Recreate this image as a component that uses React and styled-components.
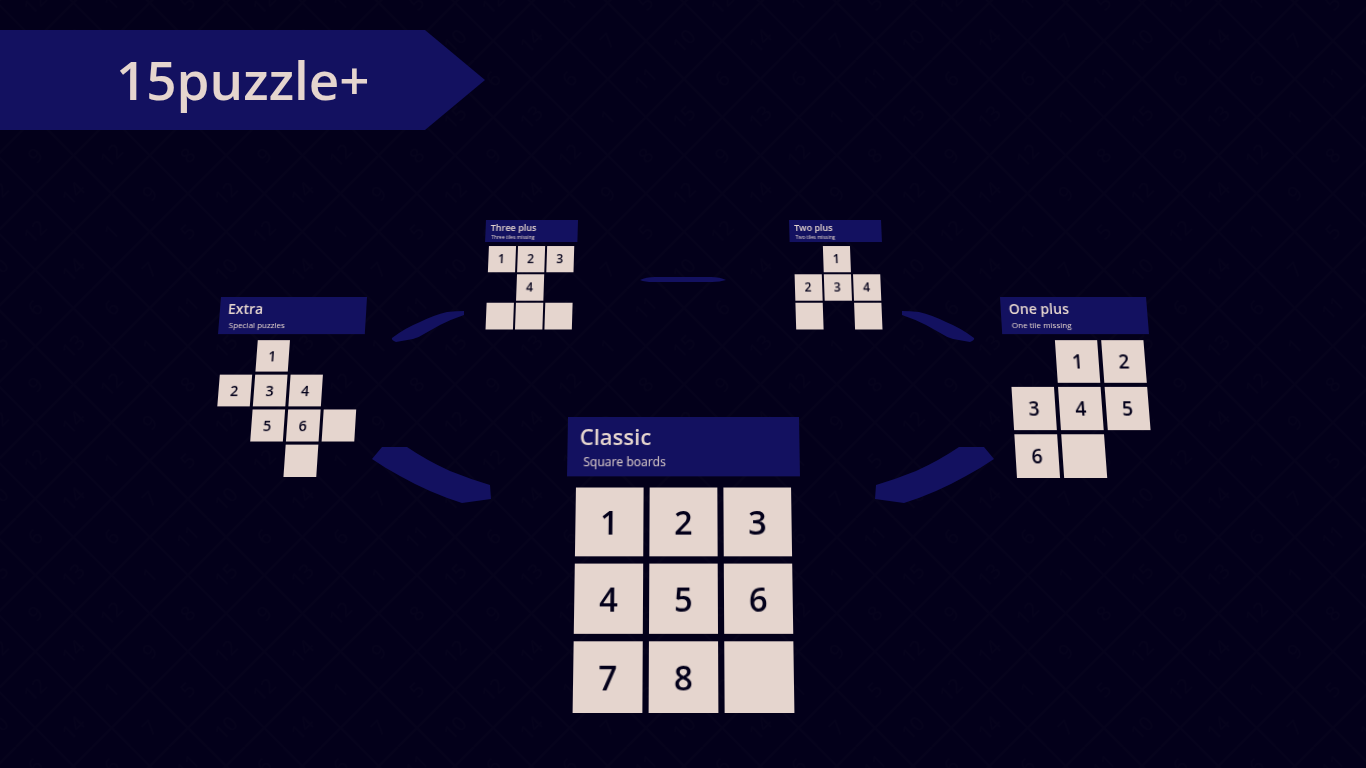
import React from "react";
import styled, { createGlobalStyle } from "styled-components";

const navy = "#131160";
const cream = "#e5d5ce";
const night = "#03001a";
const wallInk = "#06031c";

const GlobalStyle = createGlobalStyle`
  *, *::before, *::after { box-sizing: border-box; }
  body {
    margin: 0;
    background: ${night};
    color: ${cream};
    font-family: "Open Sans", "Noto Sans", sans-serif;
  }
`;

const Page = styled.div`
  position: relative;
  min-height: 100vh;
  overflow: hidden;
  display: flex;
  flex-direction: column;
`;

const Wallpaper = styled.svg`
  position: absolute;
  inset: 0;
  width: 100%;
  height: 100%;
  pointer-events: none;
`;

const Banner = styled.header`
  position: relative;
  align-self: flex-start;
  margin-top: 30px;
  width: 485px;
  max-width: 100%;
  height: 100px;
  padding-left: 116px;
  display: flex;
  align-items: center;
  background: ${navy};
  clip-path: polygon(0 0, calc(100% - 60px) 0, 100% 50%, calc(100% - 60px) 100%, 0 100%);
`;

const Logo = styled.h1`
  margin: 0;
  font-size: 53px;
  line-height: 60px;
  font-weight: 600;
`;

const Carousel = styled.main`
  position: relative;
  flex: 1;
  min-height: 600px;
`;

const Ring = styled.svg`
  position: absolute;
  left: 50%;
  top: 140px;
  width: 640px;
  height: 240px;
  transform: translateX(-50%);
`;

const Board = styled.button`
  position: absolute;
  left: calc(50% + ${(p) => p.$x}px);
  top: ${(p) => p.$y}px;
  width: ${(p) => p.$size.width}px;
  padding: 0;
  border: 0;
  background: none;
  color: inherit;
  font: inherit;
  text-align: left;
  cursor: pointer;
  display: flex;
  flex-direction: column;
  gap: ${(p) => p.$size.space}px;
  transform-origin: 50% 0;
  transform: perspective(500px) rotateX(4deg) skewX(${(p) => p.$lean}deg);
`;

const Plate = styled.span`
  display: flex;
  flex-direction: column;
  height: ${(p) => p.$size.plate}px;
  padding-left: ${(p) => p.$size.inset}px;
  background: ${navy};
`;

const Title = styled.span`
  font-size: ${(p) => p.$size.title}px;
  line-height: ${(p) => p.$size.titleLine}px;
  font-weight: 600;
`;

const Subtitle = styled.span`
  padding-left: ${(p) => p.$size.indent}px;
  font-size: ${(p) => p.$size.sub}px;
  line-height: ${(p) => p.$size.subLine}px;
`;

const Tiles = styled.span`
  display: grid;
  grid-template-columns: repeat(${(p) => p.$cols}, ${(p) => p.$tile[0]}px);
  grid-auto-rows: ${(p) => p.$tile[1]}px;
  column-gap: ${(p) => p.$gap[0]}px;
  row-gap: ${(p) => p.$gap[1]}px;
  justify-content: center;
`;

const Tile = styled.span`
  display: flex;
  align-items: center;
  justify-content: center;
  background: ${(p) => (p.$empty ? "transparent" : cream)};
  color: ${night};
  font-size: ${(p) => p.$font}px;
  line-height: 1;
  font-weight: 600;
`;

const near = { width: 231, plate: 59, space: 11, inset: 12, indent: 4, title: 22, titleLine: 38, sub: 12, subLine: 14 };
const middle = { width: 146, plate: 37, space: 6, inset: 8, indent: 2, title: 14, titleLine: 24, sub: 8, subLine: 8 };
const far = { width: 92, plate: 22, space: 4, inset: 5, indent: 1, title: 9, titleLine: 15, sub: 5, subLine: 5 };

/* "." is a hole in the board, "_" a tile without a number */
const boards = [
  { title: "Three plus", sub: "Three tiles missing", x: -197, y: 90, lean: -2, size: far, tile: [27, 26], gap: [2, 2], font: 12, rows: ["1 2 3", ". 4 .", "_ _ _"] },
  { title: "Two plus", sub: "Two tiles missing", x: 106, y: 90, lean: 2, size: far, tile: [27, 26], gap: [2, 2], font: 12, rows: [". 1 .", "2 3 4", "_ . _"] },
  { title: "Extra", sub: "Special puzzles", x: -462, y: 167, lean: -4, size: middle, tile: [32, 31], gap: [3, 3], font: 14, rows: [". 1 . .", "2 3 4 .", ". 5 6 _", ". . _ ."] },
  { title: "One plus", sub: "One tile missing", x: 317, y: 167, lean: 4, size: middle, tile: [42, 42], gap: [4, 4], font: 19, rows: [". 1 2", "3 4 5", "6 _ ."] },
  { title: "Classic", sub: "Square boards", x: -115, y: 287, lean: 0, size: near, tile: [67, 67], gap: [6, 7], font: 32, rows: ["1 2 3", "4 5 6", "7 8 _"] },
];

const cell = 229 / 3;
const wallRows = [
  [6, 6, 11],
  [15, 13, 1],
  [9, 12, 8],
  [12, 14, 9],
  [12, 1, 5],
  [10, 14, 7],
];

function DiamondWall() {
  const lines = [];
  for (let n = -4; n < 8; n++) {
    const c = cell / 2 + n * cell;
    const d = n * cell;
    lines.push(`M${c} 0L${c - 229} 229`, `M${d} 0L${d + 229} 229`);
  }
  return (
    <Wallpaper aria-hidden="true">
      <defs>
        <pattern id="wall" x="-22" y="60" width="229" height="229" patternUnits="userSpaceOnUse">
          <path d={lines.join("")} stroke={wallInk} strokeWidth="2" fill="none" />
          {wallRows.map((row, r) =>
            row.map((n, k) => {
              const x = (r % 2 ? 0.25 : 0.75) * cell + k * cell;
              const y = cell / 4 + (r * cell) / 2;
              return (
                <text
                  key={`${r}-${k}`}
                  x={x}
                  y={y + 7}
                  transform={`rotate(-45 ${x} ${y})`}
                  fontSize="20"
                  textAnchor="middle"
                  fill={wallInk}
                >
                  {n}
                </text>
              );
            })
          )}
        </pattern>
      </defs>
      <rect width="100%" height="100%" fill="url(#wall)" />
    </Wallpaper>
  );
}

const nearArc =
  "M372 459L382 447L407 447Q426 460 450 471Q470 479 490 485L491 499L462 503Q430 493 400 476Q385 468 372 459Z";
const farArc =
  "M392 338Q405 328 420 322Q434 315 447 312Q456 311 464 311L464 315Q452 319 440 325L424 334Q418 338 413 339L396 342Q391 340 392 338Z";

function RingArcs() {
  return (
    <Ring viewBox="363 270 640 240" fill={navy} aria-hidden="true">
      <path d={nearArc} />
      <path d={farArc} />
      <g transform="translate(1366 0) scale(-1 1)">
        <path d={nearArc} />
        <path d={farArc} />
      </g>
      <path d="M640 280Q646 277 655 277L711 277Q720 277 726 280Q720 282 712 282L653 282Q645 282 640 280Z" />
    </Ring>
  );
}

function PuzzleBoard({ board }) {
  const { title, sub, x, y, lean, size, tile, gap, font, rows } = board;
  const cells = rows.flatMap((row) => row.split(" "));
  return (
    <Board type="button" $x={x} $y={y} $lean={lean} $size={size}>
      <Plate $size={size}>
        <Title $size={size}>{title}</Title>
        <Subtitle $size={size}>{sub}</Subtitle>
      </Plate>
      <Tiles $cols={rows[0].split(" ").length} $tile={tile} $gap={gap}>
        {cells.map((c, i) => (
          <Tile key={i} $empty={c === "."} $font={font}>
            {c === "." || c === "_" ? null : c}
          </Tile>
        ))}
      </Tiles>
    </Board>
  );
}

export default function App() {
  return (
    <>
      <GlobalStyle />
      <Page>
        <DiamondWall />
        <Banner>
          <Logo>15puzzle+</Logo>
        </Banner>
        <Carousel>
          <RingArcs />
          {boards.map((b) => (
            <PuzzleBoard key={b.title} board={b} />
          ))}
        </Carousel>
      </Page>
    </>
  );
}
